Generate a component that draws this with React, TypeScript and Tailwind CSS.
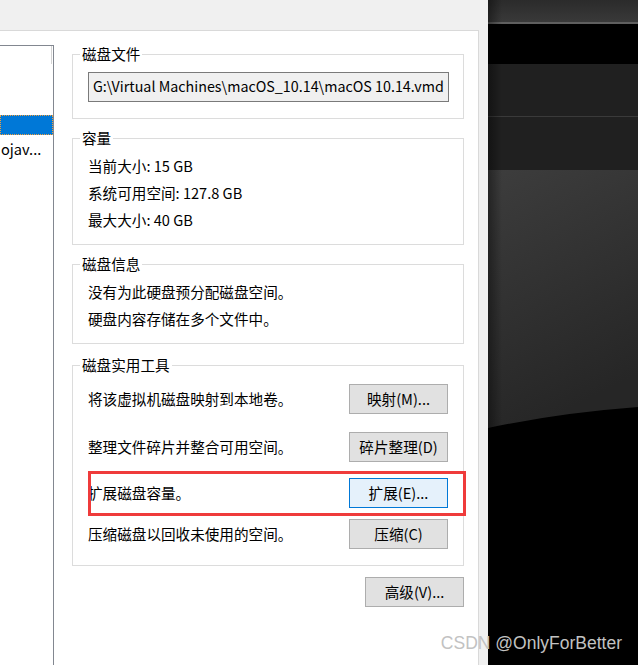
import type { ReactNode } from "react";

const ui = "font-['Noto_Sans_CJK_SC','Noto_Sans',sans-serif] text-[14.6px] text-black";

function Group({
  title,
  className = "",
  children,
}: {
  title: string;
  className?: string;
  children: ReactNode;
}) {
  return (
    <fieldset className={`border border-[#dcdcdc] ${className}`}>
      <legend className="ml-[7px] px-[2px] leading-[20px]">{title}</legend>
      {children}
    </fieldset>
  );
}

function Button({ label, active = false }: { label: string; active?: boolean }) {
  return (
    <button
      className={`h-[30px] w-[99px] shrink-0 border leading-none ${
        active ? "border-[#0078d7] bg-[#e5f1fb]" : "border-[#adadad] bg-[#e1e1e1]"
      }`}
    >
      {label}
    </button>
  );
}

const tools = [
  { text: "将该虚拟机磁盘映射到本地卷。", button: "映射(M)...", gap: "mt-[9px]" },
  { text: "整理文件碎片并整合可用空间。", button: "碎片整理(D)", gap: "mt-[18px]" },
  { text: "扩展磁盘容量。", button: "扩展(E)...", gap: "mt-[16px]", marked: true },
  { text: "压缩磁盘以回收未使用的空间。", button: "压缩(C)", gap: "mt-[11px]" },
];

function SidePanel() {
  return (
    <div className="relative flex w-[150px] shrink-0 flex-col bg-black">
      <div className="h-[22px] bg-gradient-to-b from-[#2b2b2b] to-[#393939]" />
      <div className="h-[2px] bg-[#5f5f5f]" />
      <div className="h-[40px] bg-black" />
      <div className="h-[52px] bg-[#202020]" />
      <div className="h-[1px] bg-[#3a3a3a]" />
      <div className="h-[53px] bg-[#202020]" />
      <svg width="150" height="260" viewBox="0 0 150 260" className="block">
        <defs>
          <linearGradient id="gloss" x1="0" y1="0" x2="0.3" y2="1">
            <stop offset="0" stopColor="#3d3d3d" />
            <stop offset="1" stopColor="#262626" />
          </linearGradient>
        </defs>
        <path d="M0 0 H150 V237 Q70 243 0 258 Z" fill="url(#gloss)" />
      </svg>
      {/* shadow cast by the dialog edge */}
      <div className="pointer-events-none absolute inset-y-0 left-0 w-[14px] bg-gradient-to-r from-black/40 to-transparent" />
    </div>
  );
}

export default function App() {
  return (
    <div className={`relative flex h-[665px] w-[638px] overflow-hidden ${ui}`}>
      <div className="flex w-[488px] shrink-0 flex-col bg-[#f0f0f0]">
        <div className="h-[30px] shrink-0" />
        <div className="flex w-[479px] flex-1 border-t border-r border-[#d9d9d9] bg-white">
          {/* device list, cut off on the left */}
          <div className="mt-[14px] flex w-[54px] shrink-0 flex-col border-t border-r border-[#828790]">
            <div className="h-[69px]">
              <div className="ml-auto mr-[1px] h-[18px] w-[1px] bg-[#d4d4d4]" />
            </div>
            <div className="h-[20px] border border-dotted border-[#f2a03d] bg-[#0078d7]" />
            <div className="pl-[1px] leading-[27px] whitespace-nowrap">ojav...</div>
          </div>

          <div className="ml-[18px] flex w-[392px] shrink-0 flex-col">
            <Group title="磁盘文件" className="mt-[13px] pb-[16px]">
              <div className="mt-[8px] ml-[15px] flex h-[30px] w-[361px] items-center overflow-hidden border border-[#7a7a7a] bg-[#f0f0f0] pb-[2px] pl-[4px] text-[14.3px] whitespace-nowrap">
                {"G:\\Virtual Machines\\macOS_10.14\\macOS 10.14.vmd"}
              </div>
            </Group>

            <Group title="容量" className="mt-[9px] pt-[4px] pb-[11px]">
              <div className="pl-[15px] leading-[27px]">
                <div>当前大小: 15 GB</div>
                <div>系统可用空间: 127.8 GB</div>
                <div>最大大小: 40 GB</div>
              </div>
            </Group>

            <Group title="磁盘信息" className="mt-[9px] pt-[4px] pb-[11px]">
              <div className="pl-[15px] leading-[27px]">
                <div>没有为此硬盘预分配磁盘空间。</div>
                <div>硬盘内容存储在多个文件中。</div>
              </div>
            </Group>

            <Group title="磁盘实用工具" className="mt-[11px] pb-[16px]">
              {tools.map((t) => (
                <div
                  key={t.button}
                  className={`relative flex h-[30px] items-center justify-between px-[15px] ${t.gap}`}
                >
                  <span>{t.text}</span>
                  <Button label={t.button} active={t.marked} />
                  {t.marked && (
                    <div className="pointer-events-none absolute -top-[7px] -right-[3px] -bottom-[8px] left-[15px] border-[3px] border-[#ef3b3b]" />
                  )}
                </div>
              ))}
            </Group>

            <div className="mt-[11px] self-end">
              <Button label="高级(V)..." />
            </div>
          </div>
        </div>
      </div>

      <SidePanel />

      <div className="pointer-events-none absolute right-[16px] bottom-[9px] font-['Liberation_Sans',sans-serif] text-[17.5px] text-[#c2c2c2]">
        CSDN @OnlyForBetter
      </div>
    </div>
  );
}
